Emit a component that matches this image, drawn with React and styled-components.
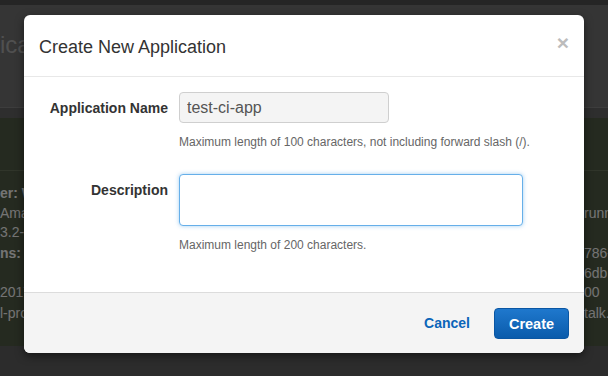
import React from "react";
import styled, { createGlobalStyle } from "styled-components";

const GlobalStyle = createGlobalStyle`
    html, body {
        margin: 0;
        padding: 0;
        width: 608px;
        height: 376px;
        overflow: hidden;
        font-family: "Liberation Sans", Helvetica, Arial, sans-serif;
    }
`;

const Page = styled.div`
    position: relative;
    width: 608px;
    height: 376px;
    overflow: hidden;
    background: #585858;
    display: flex;
    flex-direction: column;
`;

const TopBar = styled.div`
    height: 5px;
    background: #4a4a4a;
`;

const PageHeader = styled.div`
    height: 102px;
    background: #6a6a6a;
    display: flex;
    align-items: flex-start;
    overflow: hidden;
`;

const Heading = styled.h1`
    margin: 28px 0 0 -48px;
    font-size: 24px;
    line-height: 24px;
    font-weight: normal;
    color: #a0a0a0;
    white-space: nowrap;
`;

const SubBar = styled.div`
    height: 10px;
    background: #5c5c5c;
    border-top: 1px solid #7a7a7a;
`;

const Panel = styled.div`
    height: 228px;
    background: #4a5440;
    display: flex;
    flex-direction: column;
`;

const PanelHead = styled.div`
    height: 52px;
    border-bottom: 1px solid #606a55;
`;

const PanelRows = styled.div`
    display: grid;
    grid-template-columns: 1fr 24px;
    padding-top: 12px;
`;

const Cell = styled.div`
    height: ${p => p.$h}px;
    line-height: ${p => p.$h}px;
    font-size: 14px;
    font-weight: ${p => (p.$bold ? "bold" : "normal")};
    color: #e8e8e8;
    white-space: nowrap;
    overflow: hidden;
`;

const Overlay = styled.div`
    position: absolute;
    inset: 0;
    background: rgba(0, 0, 0, 0.5);
`;

const Modal = styled.div`
    position: absolute;
    left: 24px;
    top: 15px;
    width: 560px;
    height: 338px;
    background: #fff;
    border-radius: 6px;
    overflow: hidden;
    box-shadow: 0 3px 9px rgba(0, 0, 0, 0.5);
    display: flex;
    flex-direction: column;
`;

const Header = styled.div`
    height: 61px;
    flex: none;
    border-bottom: 1px solid #e8e8e8;
    padding: 0 15px;
    display: flex;
    align-items: center;
    justify-content: space-between;
`;

const Title = styled.h3`
    margin: 4px 0 0;
    font-size: 18px;
    font-weight: normal;
    color: #333;
`;

const Close = styled.button`
    border: 0;
    background: none;
    padding: 0;
    margin: -6px 0 0;
    font-family: inherit;
    font-size: 21px;
    font-weight: bold;
    line-height: 1;
    color: #bcbcbc;
    cursor: pointer;
`;

const Body = styled.div`
    flex: 1;
    padding: 15px 0 0;
`;

const Group = styled.div`
    display: grid;
    grid-template-columns: 144px 1fr;
    column-gap: 11px;
    margin-bottom: 24px;
`;

const Label = styled.label`
    text-align: right;
    padding-top: 8px;
    font-size: 14px;
    line-height: 16px;
    font-weight: bold;
    color: #333;
`;

const Field = styled.div`
    display: flex;
    flex-direction: column;
`;

const TextInput = styled.input`
    box-sizing: border-box;
    width: 210px;
    height: 31px;
    padding: 0 7px;
    border: 1px solid #cfcfcf;
    border-radius: 4px;
    background: #f4f4f4;
    font-family: inherit;
    font-size: 16px;
    color: #555;
    outline: none;
`;

const TextArea = styled.textarea`
    box-sizing: border-box;
    width: 344px;
    height: 52px;
    padding: 6px 8px;
    border: 1px solid #66afe9;
    border-radius: 4px;
    box-shadow: 0 0 4px rgba(102, 175, 233, 0.6);
    background: #fff;
    font-family: inherit;
    font-size: 14px;
    resize: none;
    outline: none;
`;

const Help = styled.span`
    margin-top: 11px;
    font-size: 12px;
    line-height: 16px;
    color: #666;
`;

const Footer = styled.div`
    height: 60px;
    flex: none;
    border-top: 1px solid #dcdcdc;
    background: #f4f4f4;
    padding: 0 15px;
    display: flex;
    align-items: center;
    justify-content: flex-end;
`;

const LinkButton = styled.button`
    border: 0;
    background: none;
    padding: 0;
    margin-right: 24px;
    font-family: inherit;
    font-size: 14px;
    font-weight: bold;
    color: #0b65b9;
    cursor: pointer;
`;

const PrimaryButton = styled.button`
    box-sizing: border-box;
    width: 75px;
    height: 31px;
    margin-top: 1px;
    border: 1px solid #0a56a3;
    border-radius: 4px;
    background: linear-gradient(#1f78cd, #0a5bab);
    font-family: inherit;
    font-size: 14.5px;
    font-weight: bold;
    color: #fff;
    cursor: pointer;
`;

const rows = [
    { left: "er: Web Server", right: "", bold: true, h: 21 },
    { left: " Amazon Linux", right: "running", h: 19 },
    { left: "3.2-centos", right: "", h: 19 },
    { left: "ns: 1", right: "786-", bold: true, h: 22 },
    { left: "", right: "6db", h: 18 },
    { left: " 2017", right: "00", h: 21 },
    { left: "l-prod", right: "talk.com", h: 21 },
];

export default function App() {
    return (
        <>
            <GlobalStyle />
            <Page>
                <TopBar />
                <PageHeader>
                    <Heading>Applications</Heading>
                </PageHeader>
                <SubBar />
                <Panel>
                    <PanelHead />
                    <PanelRows>
                        {rows.map((r, i) => (
                            <React.Fragment key={i}>
                                <Cell $bold={r.bold} $h={r.h}>{r.left}</Cell>
                                <Cell $h={r.h}>{r.right}</Cell>
                            </React.Fragment>
                        ))}
                    </PanelRows>
                </Panel>
                <Overlay />
                <Modal>
                    <Header>
                        <Title>Create New Application</Title>
                        <Close aria-label="Close">×</Close>
                    </Header>
                    <Body>
                        <Group>
                            <Label>Application Name</Label>
                            <Field>
                                <TextInput defaultValue="test-ci-app" readOnly />
                                <Help>Maximum length of 100 characters, not including forward slash (/).</Help>
                            </Field>
                        </Group>
                        <Group>
                            <Label>Description</Label>
                            <Field>
                                <TextArea />
                                <Help>Maximum length of 200 characters.</Help>
                            </Field>
                        </Group>
                    </Body>
                    <Footer>
                        <LinkButton>Cancel</LinkButton>
                        <PrimaryButton>Create</PrimaryButton>
                    </Footer>
                </Modal>
            </Page>
        </>
    );
}
